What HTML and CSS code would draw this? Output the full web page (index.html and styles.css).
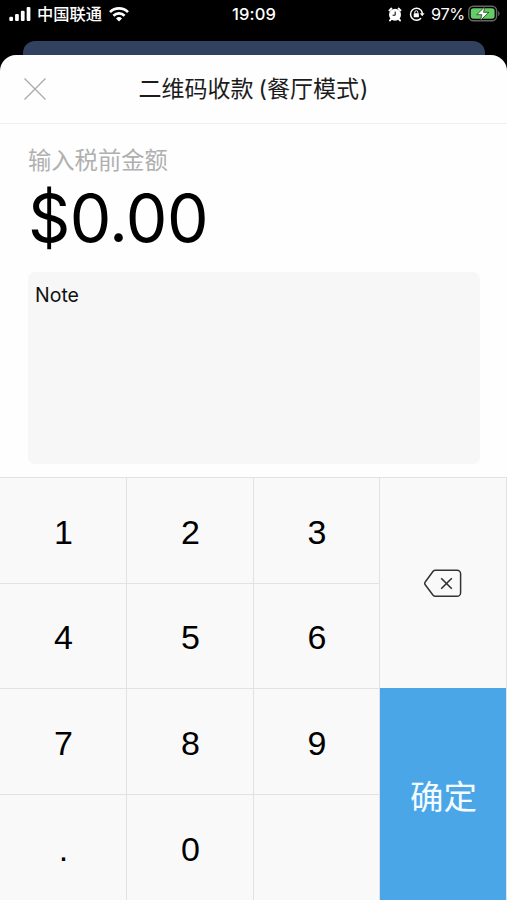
FILE: index.html
```html
<!DOCTYPE html>
<html lang="zh-CN">
<head>
<meta charset="utf-8">
<title>二维码收款</title>
<link rel="stylesheet" href="styles.css">
</head>
<body>
<div class="screen">
  <header class="status">
    <div class="status-side">
      <svg class="signal" width="23" height="14" viewBox="0 0 24 15" fill="#fff"><rect x="0" y="10.5" width="4" height="4.5" rx="1.2"/><rect x="6.2" y="7.5" width="4" height="7.5" rx="1.2"/><rect x="12.4" y="4" width="4" height="11" rx="1.2"/><rect x="18.6" y="0" width="4" height="15" rx="1.2"/></svg>
      <span class="carrier">中国联通</span>
      <svg class="wifi" width="20" height="15" viewBox="0 0 20 15" fill="none" stroke="#fff" stroke-width="2.6"><path d="M1 5.1a12.8 12.8 0 0 1 18 0"/><path d="M4.4 8.7a8 8 0 0 1 11.2 0"/><path d="M10 14.4l-3-3a4.4 4.4 0 0 1 6 0z" fill="#fff" stroke="none"/></svg>
    </div>
    <span class="clock">19:09</span>
    <div class="status-side status-right">
      <svg class="alarm" width="14" height="15" viewBox="0 0 14 15"><circle cx="7" cy="7.8" r="6" fill="#fff"/><path d="M1.5 3.4L3.4 1.6M12.5 3.4l-1.9-1.8M3 12.2l-1 1.3M11 12.2l1 1.3" stroke="#fff" stroke-width="2" stroke-linecap="round"/><path d="M7.2 4.6v3.6H4.6" fill="none" stroke="#000" stroke-width="1"/></svg>
      <svg class="lock" width="16" height="14" viewBox="0 0 16 14" fill="none" stroke="#fff"><path d="M12.2 3.4A6 6 0 1 0 12 11.2M12.2 3.4a6 6 0 0 1 1.1 3.4" stroke-width="1.5"/><path d="M10.8 6.2h4.8l-2.4 3.1z" fill="#fff" stroke="none"/><rect x="4.7" y="6.3" width="5.2" height="4" rx=".6" fill="#fff" stroke="none"/><path d="M5.8 6.5V5.2a1.5 1.5 0 0 1 3 0v1.3"/></svg>
      <span class="percent">97%</span>
      <svg class="battery" width="33" height="18" viewBox="0 0 33 18"><rect x=".8" y="1.3" width="27.8" height="14.4" rx="4.5" fill="none" stroke="#666" stroke-width="1.4"/><rect x="2.8" y="3.3" width="23.8" height="10.4" rx="2.6" fill="#65cd65"/><path d="M30.2 6v5c1.8-.6 1.8-4.4 0-5z" fill="#666"/><path d="M16.8 1.8L8.7 9.7h5.1l-1.4 5.8 8.5-8.2h-5.3z" fill="#fff" stroke="#153d17" stroke-width=".8"/></svg>
    </div>
  </header>
  <div class="back-card"></div>
  <main class="sheet">
    <div class="navbar">
      <svg class="close" width="22" height="22" viewBox="0 0 22 22" stroke="#aaa" stroke-width="1.3"><path d="M.5.5l21 21M21.5.5l-21 21"/></svg>
      <h1 class="title">二维码收款<span class="open">(</span>餐厅模式<span class="shut">)</span></h1>
    </div>
    <section class="form">
      <div class="label">输入税前金额</div>
      <div class="amount">$0.00</div>
      <div class="note">Note</div>
    </section>
    <section class="keypad">
      <div class="key">1</div><div class="key">2</div><div class="key">3</div>
      <div class="key delete"><svg width="38" height="29" viewBox="0 0 38 29" fill="none" stroke="#333" stroke-width="1.5" stroke-linejoin="round"><path d="M11.3 1.3H33a3.6 3.6 0 0 1 3.6 3.6v18.8a3.6 3.6 0 0 1-3.6 3.6H11.3a3 3 0 0 1-2.2-1L1.4 16a2.4 2.4 0 0 1 0-3.2L9.1 2.3a3 3 0 0 1 2.2-1z"/><path d="M17.2 9.2l10.6 10.6M27.8 9.2L17.2 19.8" stroke-width="1.6"/></svg></div>
      <div class="key">4</div><div class="key">5</div><div class="key">6</div>
      <div class="key">7</div><div class="key">8</div><div class="key">9</div>
      <div class="key confirm">确定</div>
      <div class="key last">.</div><div class="key last">0</div><div class="key last"></div>
    </section>
  </main>
</div>
</body>
</html>
```
FILE: styles.css
```css
* { box-sizing: border-box; }
body { margin: 0; background: #000; font-family: Inter, "Noto Sans CJK SC", sans-serif; color: #000; }
.screen { width: 507px; height: 900px; overflow: hidden; display: flex; flex-direction: column; background: #000; }
.status { height: 41px; flex: none; display: grid; grid-template-columns: 1fr auto 1fr; align-items: start; padding: 0 6px 0 9px; color: #fff; }
.status-side { display: flex; align-items: center; height: 28px; }
.status-right { justify-content: flex-end; }
.carrier { font-size: 16.3px; line-height: 28px; font-weight: 500; margin-left: 5px; white-space: nowrap; }
.wifi { margin-left: 7px; }
.clock { font-size: 16.5px; line-height: 29px; font-weight: 500; letter-spacing: .1px; margin-right: 2px; }
.lock { margin-left: 7px; }
.percent { font-size: 16.3px; line-height: 28px; margin-left: 6px; letter-spacing: -.3px; }
.battery { margin-left: 3px; }
.back-card { height: 14px; flex: none; margin: 0 22px 0 23px; background: #32415f; border-radius: 12px 12px 0 0; }
.sheet { flex: 1; display: flex; flex-direction: column; background: #fefefe; border-radius: 16px 16px 0 0; overflow: hidden; }
.navbar { height: 69px; flex: none; display: grid; grid-template-columns: 46px 1fr 46px; align-items: center; border-bottom: 1px solid #f0f0f0; }
.close { margin-left: 24px; }
.title { margin: 0; text-align: center; font-size: 23px; line-height: 34px; font-weight: 400; color: #1c1c1c; white-space: nowrap; }
.open { margin-left: 5px; }
.shut { margin-left: 1px; }
.form { height: 353px; flex: none; padding: 20px 27px 0 28px; }
.label { font-size: 23.3px; line-height: 34px; font-weight: 400; color: #b0b0b0; }
.amount { font-size: 66px; line-height: 80px; letter-spacing: -.6px; }
.note { height: 192px; margin-top: 14px; padding: 9px 7px; border-radius: 7px; background: #f7f7f7; font-size: 19.5px; line-height: 28px; color: #111; }
.keypad { flex: 1; display: grid; grid-template-columns: 127px 127px 126px 1fr; grid-template-rows: 106px 105px 106px 1fr; border-top: 1px solid #e0e3e3; background: #f9f9f9; }
.key { display: flex; align-items: center; justify-content: center; padding: 2px 0 0 1px; border-right: 1px solid #e0e3e3; border-bottom: 1px solid #e0e3e3; font-family: "Liberation Sans", sans-serif; font-size: 34px; line-height: 40px; }
.last { border-bottom: 0; }
.delete { grid-column: 4; grid-row: 1 / span 2; border-bottom: 0; padding: 0 1px 1px 0; }
.confirm { grid-column: 4; grid-row: 3 / span 2; border-bottom: 0; padding-top: 2px; margin-top: -1px; background: #4ba6e7; color: #f3fbff; font-family: "Noto Sans CJK SC", sans-serif; font-size: 33.5px; font-weight: 400; }
```
